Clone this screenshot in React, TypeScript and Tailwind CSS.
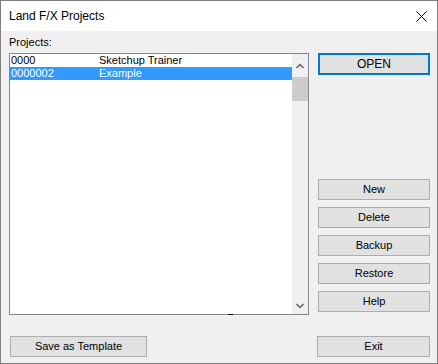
const projects = [
  { id: "0000", name: "Sketchup Trainer", selected: false },
  { id: "0000002", name: "Example", selected: true },
];

const sideButtons = ["New", "Delete", "Backup", "Restore", "Help"];

function Btn({ label, className = "" }: { label: string; className?: string }) {
  return (
    <button
      className={`flex h-[21px] items-center justify-center border border-[#adadad] bg-[#e1e1e1] text-[11px] text-black ${className}`}
    >
      {label}
    </button>
  );
}

export default function App() {
  return (
    <div
      className="flex h-[364px] w-[438px] flex-col border border-[#7f7f7f] bg-[#f0f0f0]"
      style={{ fontFamily: '"Liberation Sans", Arial, sans-serif' }}
    >
      <div className="flex h-[30px] items-center justify-between bg-white pl-[8px] pr-[9px]">
        <span className="text-[12px] text-black">Land F/X Projects</span>
        <svg width="11" height="11" viewBox="0 0 11 11" className="mr-[1px]">
          <path d="M0.5 0.5 L10.5 10.5 M10.5 0.5 L0.5 10.5" stroke="#000" strokeWidth="1" />
        </svg>
      </div>

      <div className="flex flex-1 flex-col pl-[8px] pr-[7px]">
        <div className="flex">
          <div className="flex w-[300px] flex-col">
            <span className="mt-[5px] h-[17px] text-[11px] leading-[13px] text-black">Projects:</span>
            <div className="relative flex h-[262px] border border-[#828790] bg-white">
              <div className="flex flex-1 flex-col pt-[0px]">
                {projects.map((p) => (
                  <div
                    key={p.id}
                    className={`flex h-[13px] items-center text-[11px] leading-[13px] ${
                      p.selected ? "bg-[#3399ff] text-white" : "text-black"
                    }`}
                  >
                    <span className="w-[89px] pl-[1px]">{p.id}</span>
                    <span>{p.name}</span>
                  </div>
                ))}
              </div>
              <div className="flex w-[16px] flex-col bg-[#f0f0f0]">
                <div className="flex h-[23px] items-center justify-center">
                  <svg width="8" height="6" viewBox="0 0 8 6">
                    <path d="M0.5 5 L4 1.5 L7.5 5" fill="none" stroke="#606060" strokeWidth="1.5" />
                  </svg>
                </div>
                <div className="h-[24px] bg-[#cdcdcd]" />
                <div className="flex-1" />
                <div className="flex h-[17px] items-center justify-center">
                  <svg width="8" height="6" viewBox="0 0 8 6">
                    <path d="M0.5 1 L4 4.5 L7.5 1" fill="none" stroke="#606060" strokeWidth="1.5" />
                  </svg>
                </div>
              </div>
              <div className="absolute bottom-[-1px] left-[218px] h-[1px] w-[5px] bg-black" />
            </div>
          </div>

          <div className="ml-[9px] flex w-[112px] flex-col pt-[22px]">
            <button className="flex h-[22px] items-center justify-center border-2 border-[#0078d7] bg-[#e1e1e1] text-[12px] text-black">
              OPEN
            </button>
            <div className="mt-[104px] flex flex-col gap-[7px]">
              {sideButtons.map((b) => (
                <Btn key={b} label={b} />
              ))}
            </div>
          </div>
        </div>

        <div className="mt-[21px] flex justify-between">
          <Btn label="Save as Template" className="ml-[1px] w-[137px]" />
          <Btn label="Exit" className="w-[113px]" />
        </div>
      </div>
    </div>
  );
}
